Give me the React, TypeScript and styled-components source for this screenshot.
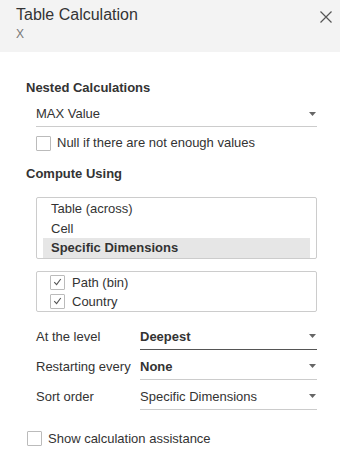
import styled, { createGlobalStyle } from 'styled-components';

const Global = createGlobalStyle`
  html, body { margin: 0; padding: 0; background: #fff; }
  body { font-family: "Liberation Sans", Arial, sans-serif; color: #333; }
  * { box-sizing: border-box; }
`;

function Arrow() {
  return (
    <ArrowIcon viewBox="0 0 7 4" width="7" height="4">
      <path d="M0 0 H7 L3.5 4 Z" fill="#666" />
    </ArrowIcon>
  );
}

function CheckMark() {
  return (
    <svg viewBox="0 0 14 14" width="14" height="14">
      <path d="M3.5 7.2 L6 9.8 L10.5 3.8" fill="none" stroke="#555" strokeWidth="1.2" />
    </svg>
  );
}

type SelectProps = { value: string; bold?: boolean; active?: boolean };

function Select({ value, bold, active }: SelectProps) {
  return (
    <SelectBox $active={active}>
      <SelectValue $bold={bold}>{value}</SelectValue>
      <Arrow />
    </SelectBox>
  );
}

function App() {
  return (
    <Panel>
      <Global />
      <Header>
        <TitleBlock>
          <Title>Table Calculation</Title>
          <Subtitle>X</Subtitle>
        </TitleBlock>
        <CloseButton viewBox="0 0 12 12" width="12" height="12">
          <path d="M0.5 0.5 L11.5 11.5 M11.5 0.5 L0.5 11.5" stroke="#555" strokeWidth="1.2" />
        </CloseButton>
      </Header>
      <Body>
        <SectionTitle>Nested Calculations</SectionTitle>
        <Indent $top={1}>
          <Select value="MAX Value" />
          <CheckRow>
            <Box />
            <span>Null if there are not enough values</span>
          </CheckRow>
        </Indent>
        <SectionTitle $top={15}>Compute Using</SectionTitle>
        <Indent>
          <ListBox>
            <ListItem>Table (across)</ListItem>
            <ListItem>Cell</ListItem>
            <ListItem $selected>Specific Dimensions</ListItem>
          </ListBox>
          <DimBox>
            <DimRow>
              <Box><CheckMark /></Box>
              <span>Path (bin)</span>
            </DimRow>
            <DimRow>
              <Box><CheckMark /></Box>
              <span>Country</span>
            </DimRow>
          </DimBox>
          <FieldGrid>
            <FieldLabel>At the level</FieldLabel>
            <Select value="Deepest" bold active />
            <FieldLabel>Restarting every</FieldLabel>
            <Select value="None" bold />
            <FieldLabel>Sort order</FieldLabel>
            <Select value="Specific Dimensions" />
          </FieldGrid>
        </Indent>
        <AssistRow>
          <Box />
          <span>Show calculation assistance</span>
        </AssistRow>
      </Body>
    </Panel>
  );
}

const Panel = styled.div`
  width: 340px;
  height: 476px;
  background: #fff;
  overflow: hidden;
`;

const Header = styled.div`
  height: 52px;
  background: #f3f3f3;
  display: flex;
  justify-content: space-between;
  align-items: flex-start;
  padding: 5px 8px 0 16px;
`;

const TitleBlock = styled.div`
  display: flex;
  flex-direction: column;
`;

const Title = styled.div`
  font-size: 16px;
  line-height: 20px;
  color: #333;
`;

const Subtitle = styled.div`
  font-size: 12px;
  line-height: 14px;
  margin-top: 2px;
  color: #777;
`;

const CloseButton = styled.svg`
  margin-top: 6px;
`;

const Body = styled.div`
  padding: 28px 0 0 26px;
`;

const SectionTitle = styled.div<{ $top?: number }>`
  font-size: 13px;
  font-weight: 700;
  line-height: 16px;
  color: #333;
  margin-top: ${(p) => p.$top ?? 0}px;
`;

const Indent = styled.div<{ $top?: number }>`
  padding-left: 10px;
  padding-top: ${(p) => p.$top ?? 0}px;
  width: 291px;
`;

const SelectBox = styled.div<{ $active?: boolean }>`
  display: flex;
  align-items: center;
  justify-content: space-between;
  height: 30px;
  padding: 4px 1px 0 0;
  border-bottom: 1px solid ${(p) => (p.$active ? '#555' : '#ccc')};
`;

const SelectValue = styled.span<{ $bold?: boolean }>`
  font-size: 13px;
  font-weight: ${(p) => (p.$bold ? 700 : 400)};
  color: #333;
`;

const ArrowIcon = styled.svg`
  display: block;
`;

const CheckRow = styled.div`
  display: flex;
  align-items: center;
  gap: 6px;
  margin-top: 8px;
  font-size: 13px;
  line-height: 16px;
`;

const Box = styled.span`
  width: 15px;
  height: 15px;
  border: 1px solid #bbb;
  border-radius: 1px;
  display: inline-flex;
  align-items: center;
  justify-content: center;
  background: #fff;
  flex: none;
`;

const ListBox = styled.div`
  margin-top: 15px;
  border: 1px solid #ccc;
  border-radius: 2px;
  padding: 1px 6px 0 6px;
  display: flex;
  flex-direction: column;
`;

const ListItem = styled.div<{ $selected?: boolean }>`
  height: 19.5px;
  line-height: 19px;
  font-size: 13px;
  padding-left: 8px;
  font-weight: ${(p) => (p.$selected ? 700 : 400)};
  background: ${(p) => (p.$selected ? '#e6e6e6' : 'transparent')};
`;

const DimBox = styled.div`
  margin-top: 12px;
  border: 1px solid #ccc;
  border-radius: 2px;
  padding: 3px 0 2px 13px;
  display: flex;
  flex-direction: column;
  gap: 4px;
`;

const DimRow = styled.div`
  display: flex;
  align-items: center;
  gap: 7px;
  font-size: 13px;
  line-height: 15px;
`;

const FieldGrid = styled.div`
  display: grid;
  grid-template-columns: 104px 1fr;
  margin-top: 8px;
  align-items: end;
`;

const FieldLabel = styled.div`
  font-size: 13px;
  color: #333;
  height: 30px;
  display: flex;
  align-items: center;
  padding-top: 4px;
`;

const AssistRow = styled.div`
  display: flex;
  align-items: center;
  gap: 6px;
  margin-top: 21px;
  margin-left: 1px;
  font-size: 13px;
  line-height: 16px;
`;

export default App;
